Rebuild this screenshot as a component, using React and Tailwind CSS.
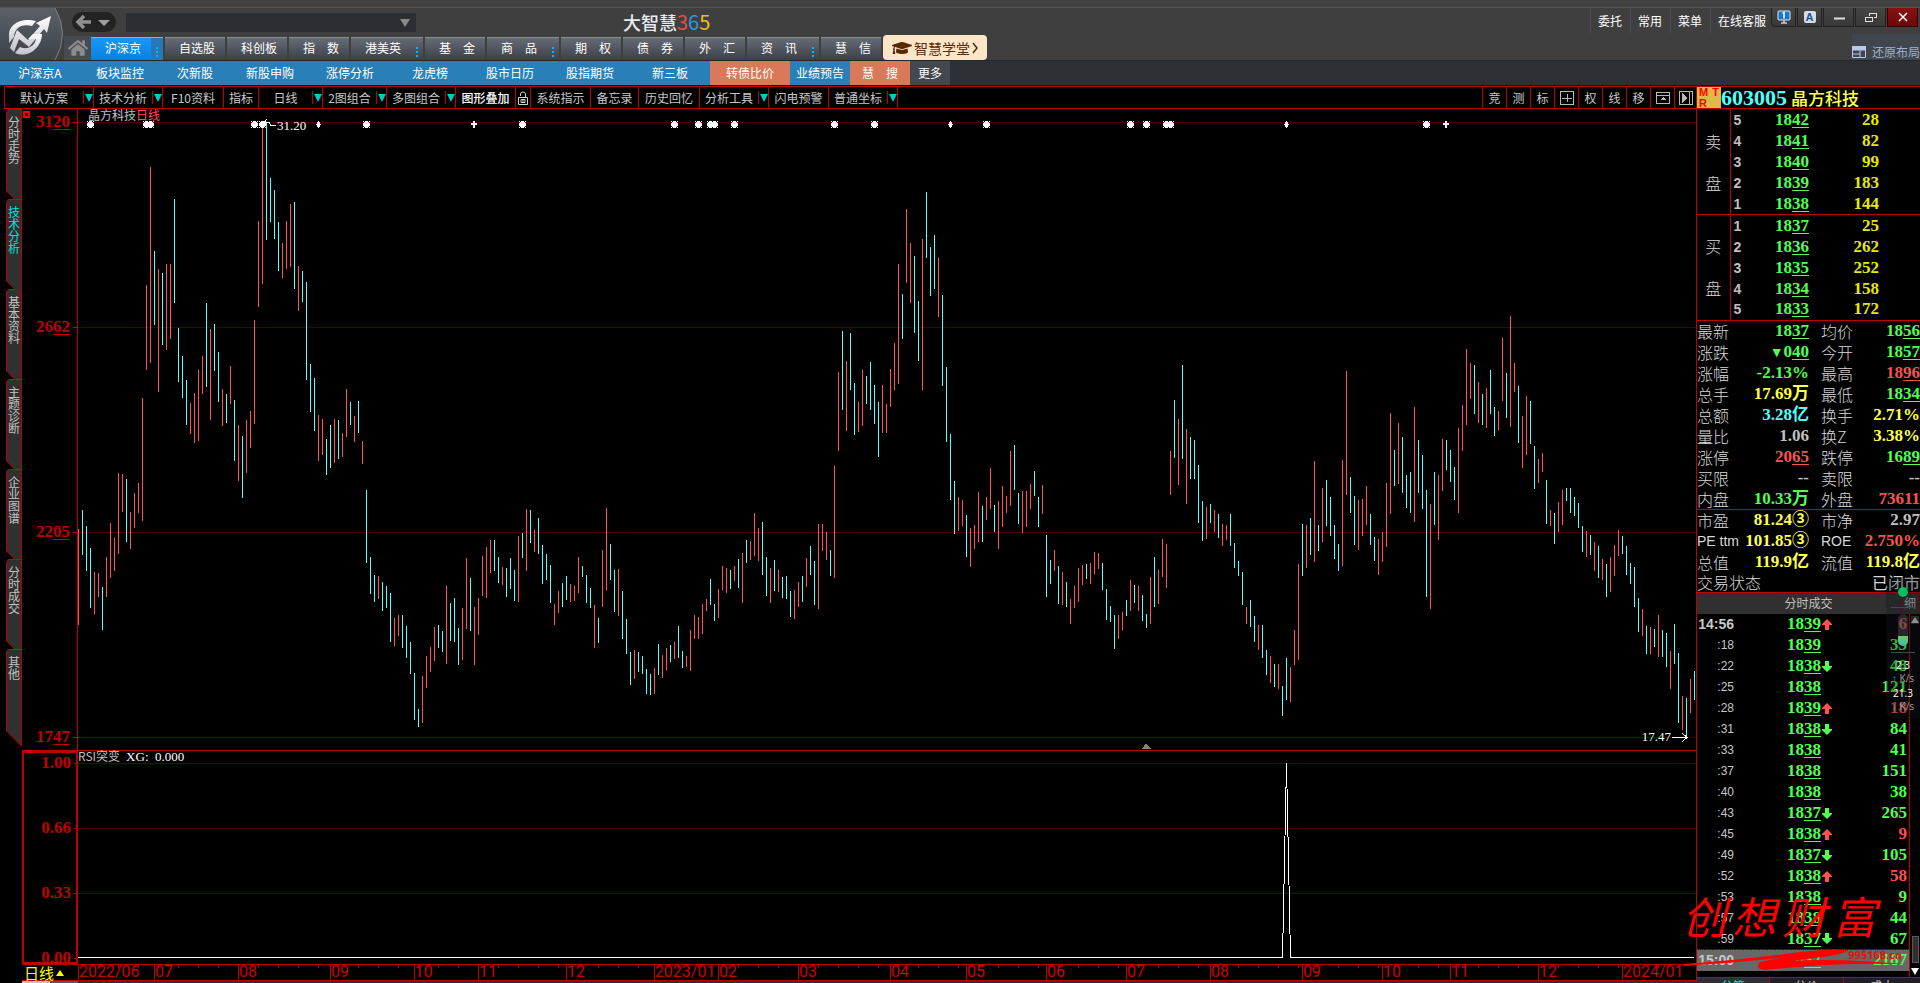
import { useState } from 'react';
import { FaGraduationCap, FaHome } from 'react-icons/fa';

// r = up bar, c = down bar, then high and low in chart units
const BARS = `
r529-625 c510-555 c526-571 c548-608 r572-614 r573-597 c587-630 r557-597 r523-578 r538-571
r473-554 r474-512 c479-542 r512-549 r493-528 r483-513 r398-521 r285-370 r167-363 c251-325
r269-392 c273-345 r264-350 r264-339 c199-303 c328-382 c356-398 c380-425 r403-434 r393-443
r370-441 r356-394 c303-387 r329-420 c324-371 c352-402 r389-426 c394-423 r366-404 c400-461
r425-481 c436-498 r420-473 r411-448 r320-424 r221-307 r124-284 c123-240 c178-222 c190-239
c222-271 r243-278 r221-269 r204-267 c202-289 r266-311 c271-302 c282-380 c364-412 c378-431
r415-461 r419-455 c439-475 c425-468 r419-463 c420-459 r433-457 r389-437 c402-425 r416-442
c401-433 r441-464 c490-563 c557-594 c575-602 r576-599 c582-611 c586-608 c593-642 r618-646
r615-636 c615-648 c626-658 c642-674 c673-720 c709-727 r676-723 r656-688 r647-672 r627-661
c625-648 c631-652 r586-664 c603-641 c598-642 c628-665 r608-660 r558-629 c578-631 r607-665
r598-635 r556-596 r547-598 r540-573 c540-571 c557-583 r567-585 c568-597 c558-589 c570-601
r536-602 c533-558 r509-571 c510-543 r530-552 c518-554 c545-584 c554-580 c565-603 r604-625
r591-613 c583-607 c576-600 r584-602 r586-601 r557-593 c566-577 c575-603 c588-608 r605-648
c618-643 r550-607 r508-590 c544-580 c570-612 r569-616 c591-639 c619-654 c652-685 r650-679
c652-672 c656-674 c669-694 c674-695 r668-694 c644-675 r655-678 r648-670 c645-662 r642-659
c626-658 c651-668 r656-667 r630-671 r615-639 r617-639 r604-634 r599-611 c579-605 c604-621
r589-618 r566-590 r568-593 c570-589 r566-581 c559-588 r553-603 c540-563 r541-560 r513-556
r528-561 c522-575 c557-596 r568-603 c560-591 r570-592 c577-598 c576-599 c591-617 r590-619
r582-607 c576-602 r558-587 c546-575 c561-605 r524-609 r524-551 r532-560 c550-576 r466-578
r372-451 c331-410 r361-431 c333-390 c383-435 r402-432 r370-426 c376-404 c362-410 c385-424
c402-457 r385-433 r404-433 r369-407 r343-390 r264-384 c294-339 r209-283 r243-303 c256-333
c301-361 r239-390 c192-258 c247-296 c235-289 r258-317 c295-386 c367-442 c434-500 c481-534
r497-531 r500-526 c515-557 r528-567 r525-549 r492-542 c506-542 r497-520 r468-509 c505-532
r501-549 r486-527 r496-513 r451-506 c445-490 c493-524 r491-533 r491-527 r484-509 c471-496
c497-527 r485-514 c535-597 c560-584 r550-571 c566-604 r572-605 c582-607 r599-624 r586-608
r568-602 r565-585 c564-579 r563-584 r552-574 r553-569 c563-590 c589-620 c606-622 c615-649
r615-639 r612-630 c600-616 r580-611 c585-603 r586-611 c595-621 c614-628 r577-624 c557-607
r570-604 r539-577 r544-588 r451-495 c400-458 r419-485 c365-459 r429-504 c437-479 c440-479
c465-523 c501-541 r507-539 c504-523 r510-532 c514-538 r524-546 r525-540 c514-546 c543-568
c561-576 c572-605 r607-624 c600-627 c616-642 r625-650 c625-658 c650-675 r656-683 c664-687
r664-689 c686-716 c658-700 r667-702 r630-665 r564-660 c524-576 r525-568 c518-555 r461-562
c525-551 r488-542 c480-526 c497-536 c525-559 c544-571 r460-566 r371-495 c477-513 c496-545
r500-550 r499-536 r486-525 c514-545 c537-561 r539-575 r532-562 r483-547 r413-514 c450-486
r423-484 c437-493 c475-508 c472-513 r407-522 c440-493 c455-509 c490-597 r504-609 c472-525
r475-540 r439-491 c440-470 c450-482 c467-500 r428-513 r405-451 r349-425 r363-399 c365-414
r382-423 c394-425 r388-428 c370-414 c407-436 r411-430 r338-401 c373-418 r316-427 r363-392
c386-443 r416-468 r396-455 c401-444 c446-489 r459-483 r453-472 c480-524 r510-526 c513-544
r502-532 r490-525 c488-501 c488-513 c497-516 c503-528 c526-552 r531-557 c535-555 r542-571
c546-578 r559-580 c564-597 r557-592 r545-576 r530-556 c536-554 c546-575 c563-584 c567-607
c598-632 r609-636 c626-654 r627-654 c629-647 r615-657 c630-657 c633-667 r651-689 c624-664
c653-723 r696-730 c698-738 r679-713 c671-700`.trim().split(/\s+/);

const STARS = [90, 146, 150, 254, 262, 366, 522, 674, 698, 710, 714, 734, 834, 874, 986, 1130, 1146, 1166, 1170, 1426];
const DIAMONDS = [318, 950, 1286];
const PLUSES = [474, 1446];

// label and number of pixels of trading days in the month
const MONTHS = [
  ['2022/06', 76], ['07', 84], ['08', 92], ['09', 84], ['10', 64], ['11', 88], ['12', 88],
  ['2023/01', 64], ['02', 80], ['03', 92], ['04', 76], ['05', 80], ['06', 80], ['07', 84],
  ['08', 92], ['09', 80], ['10', 68], ['11', 88], ['12', 84], ['2024/01', 74],
];

const TABS = [
  ['沪深京', true], ['自选股'], ['科创板'], ['指\u3000数'], ['港美英', true], ['基\u3000金'],
  ['商\u3000品', true], ['期\u3000权'], ['债\u3000券'], ['外\u3000汇'], ['资\u3000讯', true], ['慧\u3000信'],
];

const NAV = [
  ['沪深京A', 'w-20'], ['板块监控', 'w-20'], ['次新股', 'w-[70px]'], ['新股申购', 'w-20'],
  ['涨停分析', 'w-20'], ['龙虎榜', 'w-20'], ['股市日历', 'w-20'], ['股指期货', 'w-20'],
  ['新三板', 'w-20'], ['转债比价', 'w-20 bg-[#d9795a]'], ['业绩预告', 'w-[60px]'],
  ['慧\u3000搜', 'w-[60px] bg-[#d9795a]'], ['更多', 'w-10 bg-[#43484f]'],
];

const TOOLS = [
  ['默认方案', 'w-[78px]', true], ['技术分析', 'w-[58px]', true], ['F10资料', 'w-[60px]'],
  ['指标', 'w-[34px]'], ['日线', 'w-[53px]', true], ['2图组合', 'w-[53px]', true],
  ['多图组合', 'w-[58px]', true], ['图形叠加', 'w-[59px] text-white font-medium'], ['lock', 'w-[14px]'],
  ['系统指示', 'w-[59px]'], ['备忘录', 'w-[47px]'], ['历史回忆', 'w-[60px]'],
  ['分析工具', 'w-[58px]', true], ['闪电预警', 'w-[59px]'], ['普通坐标', 'w-[58px]', true],
];

const SIDE = ['分时走势', '技术分析', '基本资料', '主题诊断', '企业图谱', '分时成交', '其他'];

const G = 'text-[#50ff50]';
const R = 'text-[#ff5050]';
const Y = 'text-[#ffff50]';
const C = 'text-[#50ffff]';
const W = 'text-[#c0c0c0]';

const SELL = [[5, '1842', 28], [4, '1841', 82], [3, '1840', 99], [2, '1839', 183], [1, '1838', 144]];
const BUY = [[1, '1837', 25], [2, '1836', 262], [3, '1835', 252], [4, '1834', 158], [5, '1833', 172]];

const QUOTE = [
  ['最新', '1837', G, '均价', '1856', G],
  ['涨跌', '▼040', G, '今开', '1857', G],
  ['涨幅', '-2.13%', G, '最高', '1896', R],
  ['总手', '17.69万', Y, '最低', '1834', G],
  ['总额', '3.28亿', C, '换手', '2.71%', Y],
  ['量比', '1.06', W, '换Z', '3.38%', Y],
  ['涨停', '2065', R, '跌停', '1689', G],
  ['买限', '--', W, '卖限', '--', W],
  ['内盘', '10.33万', G, '外盘', '73611', R],
];

const VALUATION = [
  ['市盈', '81.24③', Y, '市净', '2.97', W],
  ['PE ttm', '101.85③', Y, 'ROE', '2.750%', R],
  ['总值', '119.9亿', Y, '流值', '119.8亿', Y],
];

const TRADES = [
  ['14:56', '1839', 'up', 6], [':18', '1839', '', 33], [':22', '1838', 'down', 48], [':25', '1838', '', 121],
  [':28', '1839', 'up', 18], [':31', '1838', 'down', 84], [':33', '1838', '', 41], [':37', '1838', '', 151],
  [':40', '1838', '', 38], [':43', '1837', 'down', 265], [':45', '1838', 'up', 9], [':49', '1837', 'down', 105],
  [':52', '1838', 'up', 58], [':53', '1838', '', 9], [':57', '1838', '', 44], [':59', '1837', 'down', 67],
  ['15:00', '1837', '', 2187],
];

// The last two digits are the decimals and get an underline
function Price({ value }) {
  const parts = value.match(/^(▼?)(\d{1,2})(\d{2})$/);
  if (!parts) return value;
  return (
    <>
      {parts[1] && <span className="text-sm">▼</span>}
      {parts[2]}
      <span className="underline decoration-1 underline-offset-2">{parts[3]}</span>
    </>
  );
}

function Logo() {
  return (
    <svg className="h-[52px] w-16 shrink-0" viewBox="0 0 64 52">
      <defs>
        <linearGradient id="logo-bg" x1="0" y1="0" x2="0" y2="1">
          <stop offset="0" stopColor="#5c6067" />
          <stop offset="1" stopColor="#3d4148" />
        </linearGradient>
        <linearGradient id="logo-fg" x1="0" y1="0" x2="0" y2="1">
          <stop offset="0" stopColor="#ffffff" />
          <stop offset="1" stopColor="#bfc2c8" />
        </linearGradient>
      </defs>
      <path d="M0 0H55Q70 26 55 52H0Z" fill="url(#logo-bg)" />
      <path d="M55 0Q70 26 55 52" fill="none" stroke="#7b8089" />
      <g fill="url(#logo-fg)">
        <path d="M9 28C8 17 20 9 36 13L32 18C22 15 14 20 14 29L9 35Z" />
        <path d="M10 40L17 22L28 32L40 18L36 15L51 8L47 25L44 21L29 39L19 31L14 44Z" />
        <path d="M15 45L20 39C28 43 35 37 36 31H28L33 26H42C42 38 30 51 15 45Z" />
      </g>
    </svg>
  );
}

function WindowButtons() {
  const base = 'flex h-[19px] items-center justify-center border border-t-0 border-[#222] bg-gradient-to-b from-[#454545] to-[#393939]';
  return (
    <div className="mr-0.5 flex gap-px self-start">
      <button type="button" aria-label="屏幕" className={`${base} w-[25px] rounded-bl`}>
        <svg className="h-3.5 w-3.5" viewBox="0 0 14 14">
          <rect x="1" y="1" width="12" height="9" rx="1" fill="#1878c8" stroke="#e0e8f0" />
          <path d="M4 13H10M7 10V13" stroke="#c8d0d8" strokeWidth="1.5" />
          <path d="M5.5 3.5L7 2.5V8.5" stroke="#fff" strokeWidth="1.5" fill="none" />
        </svg>
      </button>
      <button type="button" className={`${base} w-[25px]`}>
        <span className="flex h-3 w-3 items-center justify-center rounded-xs bg-[#d8dce0] font-['Liberation_Sans',sans-serif] text-[11px] leading-none font-bold text-[#1850b0]">A</span>
      </button>
      <button type="button" aria-label="最小化" className={`${base} w-[31px]`}>
        <svg className="h-3 w-3" viewBox="0 0 12 12"><path d="M1 7.5H12" stroke="#e0e0e0" strokeWidth="2" /></svg>
      </button>
      <button type="button" aria-label="还原" className={`${base} w-[31px]`}>
        <svg className="h-3 w-3" viewBox="0 0 12 12" fill="none" stroke="#e0e0e0" shapeRendering="crispEdges">
          <path d="M4.5 5V2.5H11.5V6.5H8.5M5 2H12" />
          <path d="M.5 6.5H7.5V10.5H.5ZM0 6H8" />
        </svg>
      </button>
      <button type="button" aria-label="关闭" className="flex h-[19px] w-[31px] items-center justify-center border border-t-0 border-[#300] bg-gradient-to-b from-[#8a1010] to-[#6a0808]">
        <svg className="h-2.5 w-2.5" viewBox="0 0 10 10"><path d="M1 1L9 9M9 1L1 9" stroke="#fff" strokeWidth="1.5" /></svg>
      </button>
    </div>
  );
}

function Header() {
  const [tab, setTab] = useState('沪深京');
  return (
    <header className="shrink-0 border-b border-[#22252a] bg-[#3f3f3f] text-xs text-white">
      <div className="h-2 border-b border-[#555] bg-[#424242]" />
      <div className="flex">
        <Logo />
        <div className="flex min-w-0 flex-1 flex-col">
          <div className="flex h-7 items-center">
            <button type="button" aria-label="后退" className="ml-2 h-5 w-11 shrink-0 rounded-full bg-[#232323]">
              <svg className="h-5 w-11" viewBox="0 0 44 20">
                <path d="M19 10H7M12 4L6 10L12 16" fill="none" stroke="#909090" strokeWidth="3.5" />
                <path d="M26 8H38L32 14Z" fill="#a0a0a0" />
              </svg>
            </button>
            <div className="relative ml-2.5 w-[290px] shrink-0">
              <select aria-label="搜索" className="h-[19px] w-full appearance-none bg-[#2b2f33]" />
              <svg className="pointer-events-none absolute top-1.5 right-1.5 h-2 w-2.5" viewBox="0 0 10 8"><path d="M0 0H10L5 8Z" fill="#8a8a8a" /></svg>
            </div>
            <h1 className="ml-[207px] text-lg leading-5 font-medium whitespace-nowrap text-[#e8e8f0]">
              大智慧<span className="text-xl leading-5 font-normal"><span className="text-[#e05048]">3</span><span className="text-[#3098e0]">6</span><span className="text-[#e8c020]">5</span></span>
            </h1>
            <nav className="ml-auto flex h-[25px] items-center self-start whitespace-nowrap">
              {['委托', '常用', '菜单', '在线客服'].map((t) => (
                <a key={t} href="#" className="flex h-full items-center border-l border-[#4a4f57] pr-2 pl-[7px] last:pr-[5px]">{t}</a>
              ))}
            </nav>
            <WindowButtons />
          </div>
          <div className="flex h-6 items-end">
            <button type="button" aria-label="首页" className="flex h-6 w-[27px] shrink-0 items-center justify-center bg-[#474a50] text-xl text-[#8c8c8c]"><FaHome /></button>
            <div className="flex gap-0.5">
              {TABS.map(([name, more]) => (
                <button
                  key={name}
                  type="button"
                  onClick={() => setTab(name)}
                  className={`flex h-[23px] shrink-0 border-t bg-gradient-to-b ${tab === name ? 'border-[#60c0ff] from-[#1898f8] to-[#0880e0]' : 'border-[#8a8f98] from-[#666b76] to-[#3c4048]'}`}
                >
                  <span className="w-[60px] pl-1 leading-5 whitespace-pre">{name}</span>
                  {more && (
                    <svg className={`h-full w-3 ${tab === name ? 'bg-[#2878b8]' : ''}`} viewBox="0 0 12 22">
                      <path d="M5 9h2v2h-2zM5 13h2v2h-2zM5 17h2v2h-2z" fill="#00b8ff" />
                    </svg>
                  )}
                </button>
              ))}
            </div>
            <button type="button" className="ml-0.5 flex h-[25px] w-[104px] shrink-0 items-center justify-center gap-0.5 rounded bg-[#fde6c8] text-sm whitespace-nowrap text-[#5a2a08]">
              <FaGraduationCap className="text-xl" />
              智慧学堂
              <svg className="h-3 w-1.5" viewBox="0 0 6 12"><path d="M1 1L5 6L1 11" fill="none" stroke="#5a2a08" strokeWidth="1.5" /></svg>
            </button>
            <button type="button" className="ml-auto flex h-[26px] w-[68px] shrink-0 items-end gap-1.5 overflow-hidden bg-[#41464e] text-xs whitespace-nowrap text-[#a0b0c8]">
              <svg className="mb-0.5 h-3 w-3.5 shrink-0" viewBox="0 0 14 12">
                <path d="M.5 .5H13.5V11.5H.5Z" fill="none" stroke="#b8c8e8" />
                <path d="M0 0H14V4H0ZM8 4V12M0 8H8" fill="#b8c8e8" stroke="#b8c8e8" />
              </svg>
              还原布局
            </button>
          </div>
        </div>
      </div>
    </header>
  );
}

function NavRow() {
  return (
    <nav className="flex h-[25px] shrink-0 border-b border-[#181a1c] bg-[#2d3136] text-xs leading-6 text-white">
      {NAV.map(([name, cls], i) => (
        <a key={name} href="#" className={`shrink-0 text-center whitespace-pre ${i < 12 ? 'bg-[#2980b9]' : ''} ${cls}`}>{name}</a>
      ))}
    </nav>
  );
}

function LockIcon() {
  return (
    <svg className="mx-auto h-3.5 w-2.5" viewBox="0 0 10 14" fill="none" stroke="#d0d0d0">
      <path d="M2.5 5V3Q2.5 1 5 1Q7.500 1 7.500 3V6.500M.5 6.500H9.500V13.500H.5ZM3 8.500H7V11.500H3ZM5 8.500V11.500" />
    </svg>
  );
}

const iconProps = { className: 'mx-auto h-3.5 w-3.5', viewBox: '0 0 14 14', fill: 'none', stroke: '#b8b8b8', shapeRendering: 'crispEdges' };

function Toolbar() {
  const right = [
    '竞', '测', '标',
    <svg key="grid" {...iconProps}><path d="M.5 .5H13.5V13.5H.5ZM7 3V11M2 7H12" /></svg>,
    '权', '线', '移',
    <svg key="up" {...iconProps}><path d="M.5 1.5H13.5V12.5H.5ZM0 4H14" /><path d="M4 9H10L7 6Z" fill="#b8b8b8" stroke="none" /></svg>,
    <svg key="play" {...iconProps}><path d="M.5 .5H13.5V13.5H.5ZM10.500 1V13" /><path d="M3 2L9 7L3 12Z" fill="#b8b8b8" stroke="none" /></svg>,
  ];
  return (
    <div className="ml-1 flex h-[23px] shrink-0 border-y border-l border-[#c00000] text-xs leading-5 text-[#c8c8c8]">
      {TOOLS.map(([name, cls, drop]) => (
        <div key={name} className="flex shrink-0 border-r border-[#c00000]">
          <button type="button" aria-label={name} className={`text-center whitespace-nowrap ${cls}`}>{name === 'lock' ? <LockIcon /> : name}</button>
          {drop && (
            <button type="button" aria-label={`${name}选项`} className="my-1 w-2.5 border-l border-[#c00000]">
              <svg className="mx-auto h-2 w-2" viewBox="0 0 8 8"><path d="M0 0H8L4 8Z" fill="#00c8c8" /></svg>
            </button>
          )}
        </div>
      ))}
      <div className="ml-auto flex">
        {right.map((item, i) => (
          <button key={i} type="button" className="w-6 shrink-0 border-l border-[#c00000] text-center last:w-[22px]">{item}</button>
        ))}
      </div>
    </div>
  );
}

function Sidebar() {
  const [active, setActive] = useState('技术分析');
  return (
    <div className="flex w-[22px] shrink-0 flex-col bg-black pl-1.5">
      {SIDE.map((name) => (
        <button
          key={name}
          type="button"
          onClick={() => setActive(name)}
          className={`relative h-[90px] w-4 shrink-0 ${active === name ? 'z-10 text-[#00e0e0]' : 'text-[#c0c0c0]'}`}
        >
          <svg className="absolute top-0 left-0 h-[98px] w-4" viewBox="0 0 16 98">
            <path d="M.5 3L2.500 .5H15.500V97L.5 82Z" fill="#303030" stroke="#c00000" />
          </svg>
          <span className="absolute top-[7px] left-0.5 w-3 text-xs leading-3">{name}</span>
        </button>
      ))}
    </div>
  );
}

function AxisLabel({ children }) {
  return (
    <div className="flex h-3 items-center justify-end gap-[3px] font-['Liberation_Serif',serif] text-[17px] leading-3 font-bold text-[#c00000]">
      <span>{children}</span>
      <span className="h-px w-1 bg-[#c00000]" />
    </div>
  );
}

function MainChart() {
  return (
    <div className="flex min-h-0 flex-1 border-b border-[#c00000]">
      <div className="relative flex w-14 shrink-0 flex-col justify-between border-r border-[#c00000] py-[7px]">
        <span className="absolute top-0.5 left-px h-[7px] w-[7px] border-2 border-[#ff0000]" />
        {['3120', '2662', '2205', '1747'].map((v) => <AxisLabel key={v}><Price value={v} /></AxisLabel>)}
      </div>
      <div className="relative min-w-0 flex-1">
        <svg className="absolute inset-0 h-full w-full" viewBox="78 109 1618 641" preserveAspectRatio="none" shapeRendering="crispEdges">
          {[122, 327, 532, 737].map((y) => <rect key={y} x="78" y={y} width="1618" height="1" fill="#400000" />)}
          {BARS.map((bar, i) => {
            const [high, low] = bar.slice(1).split('-').map(Number);
            return <rect key={i} x={78 + i * 4} y={high} width="1" height={low - high} fill={bar[0] === 'r' ? '#ff5050' : '#50ffff'} />;
          })}
          <g fill="#fff">
            {STARS.map((x) => (
              <path key={x} transform={`translate(${x - 3} 121)`} d="M2 0H5V1H6V2H7V5H6V6H5V7H2V6H1V5H0V2H1V1H2ZM0 0H1V1H0ZM6 0H7V1H6ZM0 6H1V7H0ZM6 6H7V7H6Z" />
            ))}
            {DIAMONDS.map((x) => <path key={x} transform={`translate(${x - 2} 121)`} d="M2 0H3V1H4V3H5V4H4V6H3V7H2V6H1V4H0V3H1V1H2Z" />)}
            {PLUSES.map((x) => <path key={x} transform={`translate(${x - 3} 121)`} d="M2 0H4V2H6V4H4V7H2V4H0V2H2Z" />)}
            <path d="M1142 749L1146 743L1151 749Z" fill="#808080" />
          </g>
          <g fill="none" stroke="#fff">
            <path d="M267 119L264 122L267 125M264 122.500H269L271 125.500H276" />
            <path d="M1672 737.500H1687M1682 733L1687 737.500L1682 742" />
          </g>
        </svg>
        <p className="absolute -top-px left-2.5 text-xs leading-[14px] text-[#c0c0c0]">晶方科技<span className="text-[#ff5050]">日线</span></p>
        <span className="absolute top-2.5 left-[199px] font-['Liberation_Serif',serif] text-[13px] leading-[14px] text-white">31.20</span>
        <span className="absolute right-[25px] bottom-1.5 font-['Liberation_Serif',serif] text-[13px] leading-[14px] text-white">17.47</span>
      </div>
    </div>
  );
}

function IndicatorChart() {
  return (
    <div className="flex h-[213px] shrink-0">
      <div className="flex w-14 shrink-0 flex-col justify-between pt-1.5 ring-2 ring-[#c00000] ring-inset">
        {['1.00', '0.66', '0.33', '0.00'].map((v) => <AxisLabel key={v}>{v}</AxisLabel>)}
      </div>
      <div className="relative min-w-0 flex-1">
        <svg className="absolute inset-0 h-full w-full" viewBox="78 751 1618 213" preserveAspectRatio="none" shapeRendering="crispEdges">
          {[763, 828, 893].map((y) => <rect key={y} x="78" y={y} width="1618" height="1" fill="#400000" />)}
          <path d="M78 957.500H1282.500L1286.500 763L1290.500 957.500H1694" fill="none" stroke="#fff" />
        </svg>
        <p className="absolute -top-0.5 left-0 text-xs leading-[14px] text-[#c0c0c0]">
          RSI突变<span className="ml-1.5 font-['Liberation_Serif',serif] text-[13px] text-white">XG:&nbsp; 0.000</span>
        </p>
      </div>
    </div>
  );
}

function DateAxis() {
  return (
    <div className="flex h-[17px] shrink-0 border-y border-[#c00000]">
      <button type="button" className="flex w-14 shrink-0 items-center pl-0.5 text-[15px] leading-[15px] text-[#ffff00]">
        日线<svg className="ml-0.5 h-1.5 w-2" viewBox="0 0 8 6"><path d="M0 6H8L4 0Z" fill="#ffff00" /></svg>
      </button>
      <div className="relative flex min-w-0 flex-1">
        <svg className="absolute top-0 left-0 h-[3px] w-full" viewBox="0 0 1618 3" preserveAspectRatio="none" shapeRendering="crispEdges">
          {Array.from({ length: 80 }, (_, i) => <rect key={i} x={20 * (i + 1)} y="0" width="1" height="3" fill="#c00000" />)}
        </svg>
        {MONTHS.map(([label, days], i) => (
          <span
            key={i}
            className="min-w-0 basis-0 border-l border-[#c00000] font-['Liberation_Sans_Narrow','Roboto',sans-serif] text-base leading-[14px] text-[#d00000]"
            style={{ flexGrow: days }}
          >
            {label}
          </span>
        ))}
      </div>
    </div>
  );
}

function DepthTable({ side, rows, cls }) {
  return (
    <table className={`w-full shrink-0 table-fixed border-b border-[#c00000] ${cls}`}>
      <tbody>
        {rows.map(([level, price, amount], i) => (
          <tr key={level} className="h-[21px]">
            {i === 0 && (
              <th rowSpan={5} scope="rowgroup" className="w-[33px] border-r border-[#c00000] p-0 text-center text-base leading-[42px] font-light text-[#d8d8d8]">
                {side}<br />盘
              </th>
            )}
            <td className="w-6 p-0 pl-[3px] font-['Liberation_Sans',sans-serif] text-sm leading-5 font-bold text-[#c0c0c0]">{level}</td>
            <td className="w-[55px] p-0 text-right font-['Liberation_Serif',serif] text-[17px] leading-5 font-bold text-[#50ff50]"><Price value={price} /></td>
            <td className="p-0 pr-[41px] text-right font-['Liberation_Serif',serif] text-[17px] leading-5 font-bold text-[#e8e800]">{amount}</td>
          </tr>
        ))}
      </tbody>
    </table>
  );
}

function QuoteRows({ rows }) {
  const num = "font-['Liberation_Serif','Noto_Sans_CJK_SC',serif] text-[17px] font-bold";
  const latin = "font-['Liberation_Sans',sans-serif] text-sm font-normal leading-5";
  return rows.map(([l1, v1, c1, l2, v2, c2]) => (
    <dl key={l1} className="grid h-[21px] shrink-0 grid-cols-[112px_1fr] text-base leading-5 font-light whitespace-nowrap text-[#d8d8d8]">
      <div className="flex justify-between">
        <dt className={l1 === 'PE ttm' ? latin : ''}>{l1}</dt>
        <dd className={`${num} leading-5 ${c1}`}><Price value={v1} /></dd>
      </div>
      <div className="flex justify-between pl-3">
        <dt className={l2 === 'ROE' ? latin : ''}>{l2}</dt>
        <dd className={`${num} leading-5 ${c2}`}><Price value={v2} /></dd>
      </div>
    </dl>
  ));
}

function TradeArrow({ dir }) {
  if (!dir) return null;
  return dir === 'up' ? (
    <svg className="h-[11px] w-2.5" viewBox="0 0 10 11"><path d="M5 0L10 5V6H7V11H3V6H0V5Z" fill="#ff5050" /></svg>
  ) : (
    <svg className="h-[11px] w-2.5" viewBox="0 0 10 11"><path d="M5 11L10 6V5H7V0H3V5H0V6Z" fill="#50ff50" /></svg>
  );
}

function TradeList() {
  return (
    <div className="flex min-h-0 flex-1 overflow-hidden border-b border-[#c00000]">
      <div className="min-w-0 flex-1 border-r border-[#c00000]">
        <table className="w-full table-fixed">
          <tbody>
            {TRADES.map(([time, price, dir, amount], i) => {
              const last = i === TRADES.length - 1;
              const full = time.length > 3;
              return (
                <tr key={time} className={`h-[21px] ${last ? 'border-t border-dotted border-[#c00000] bg-[#686868]' : ''}`}>
                  <td className={`w-[37px] p-0 text-right font-['Liberation_Sans',sans-serif] leading-5 text-[#c8c8c8] ${full ? 'text-sm font-bold' : 'text-xs'}`}>{time}</td>
                  <td className="w-[87px] p-0 text-right font-['Liberation_Serif',serif] text-[17px] leading-5 font-bold text-[#50ff50]"><Price value={price} /></td>
                  <td className="w-3 p-0 pl-px"><TradeArrow dir={dir} /></td>
                  <td className={`p-0 pr-0.5 text-right font-['Liberation_Serif',serif] text-[17px] leading-5 font-bold ${dir === 'up' ? 'text-[#ff5050]' : 'text-[#50ff50]'}`}>{amount}</td>
                </tr>
              );
            })}
          </tbody>
        </table>
      </div>
      <div className="flex w-2.5 shrink-0 flex-col items-center py-0.5">
        <svg className="h-2 w-2" viewBox="0 0 8 8"><path d="M0 8H8V0H0Z" fill="#303030" /><path d="M0 7H8L4 1Z" fill="#d0d0d0" /></svg>
        <span className="mt-auto mb-1 h-[27px] w-[7px] border border-[#585858] bg-[#303030]" />
        <svg className="h-2 w-2" viewBox="0 0 8 8"><path d="M0 1H8L4 8Z" fill="#fff" /></svg>
      </div>
    </div>
  );
}

// Floating network speed meter
function SpeedMeter() {
  return (
    <div className="absolute top-[577px] right-0 flex h-[141px] w-[34px] flex-col items-center rounded-bl-lg bg-[#141820]/35 pt-2.5 font-['Open_Sans',sans-serif] text-[10px] leading-[13px] text-white">
      <span className="h-2.5 w-2.5 rounded-full bg-[#00c060]" />
      <span className="mt-2.5 h-px w-6 bg-[#404850]" />
      <span className="mt-1.5 flex h-8 w-2.5 items-end overflow-hidden rounded-full bg-[#505860]/40">
        <span className="h-2.5 w-full bg-gradient-to-b from-[#70c860] to-[#30c0b0]" />
      </span>
      <span className="mt-1.5 h-px w-6 bg-[#404850]" />
      <span className="mt-1.5">2.3</span>
      <span className="text-[#a0a0a0]"><span className="text-[#20a0ff]">↑</span> K/s</span>
      <span className="mt-0.5">21.3</span>
      <span className="text-[#a0a0a0]"><span className="text-[#00c060]">↓</span> K/s</span>
    </div>
  );
}

function Watermark() {
  return (
    <div className="pointer-events-none absolute right-2 bottom-1.5 h-[92px] w-[230px] text-[#ff0000]">
      <p className="flex gap-1.5 text-[44px] leading-[60px] italic"><span>创</span><span>想</span><span>财</span><span>富</span></p>
      <svg className="absolute bottom-0 left-0 h-8 w-full" viewBox="0 0 230 32" fill="#ff0000">
        <path d="M2 19Q60 15 110 8Q150 3 166 5Q164 9 140 12L110 16Q150 13 222 19Q160 18 115 22L82 25Q72 23 78 17L98 13Q50 18 2 21Z" />
      </svg>
      <span className="absolute right-2.5 bottom-4 font-['Noto_Sans',sans-serif] text-[11px] leading-3 font-bold text-[#e01010]">995168.cn</span>
    </div>
  );
}

function QuotePanel() {
  return (
    <aside className="flex w-56 shrink-0 flex-col overflow-hidden border-l border-[#c00000]">
      <div className="flex h-[23px] shrink-0 items-center border-y border-[#c00000]">
        <span className="grid h-full w-6 grid-cols-2 bg-[#e2b84a] px-0.5 font-['Liberation_Sans',sans-serif] text-[11px] leading-[10px] font-bold text-[#ff0000]">
          <span>M</span><span className="text-right">T</span><span>R</span>
        </span>
        <span className="font-['Liberation_Serif',serif] text-[22px] leading-5 font-bold text-[#50ffff]">603005</span>
        <h2 className="ml-1 text-[17px] leading-5 font-medium text-[#ffff50]">晶方科技</h2>
      </div>
      <DepthTable side="卖" rows={SELL} cls="h-[106px]" />
      <DepthTable side="买" rows={BUY} cls="h-[105px]" />
      <div className="h-[189px] shrink-0 border-b border-[#c00000]"><QuoteRows rows={QUOTE} /></div>
      <QuoteRows rows={VALUATION} />
      <div className="flex h-5 shrink-0 justify-between border-b border-[#c00000] text-base leading-[18px] font-light text-[#d8d8d8]">
        <span>交易状态</span><span className="font-normal">已闭市</span>
      </div>
      <div className="flex h-[21px] shrink-0 bg-[#303030] text-xs leading-5 text-[#c0c0c0]">
        <h3 className="flex-1 pl-5 text-center">分时成交</h3>
        <button type="button" className="w-5 border border-[#900000] leading-[18px]">细</button>
      </div>
      <TradeList />
      <div className="flex h-[5px] shrink-0 overflow-hidden bg-[#202020] text-center text-xs leading-4 text-[#c0c0c0]">
        <button type="button" className="h-4 w-[73px] border-r border-[#c00000] bg-[#303030] text-[#00e0e0]">分笔</button>
        <button type="button" className="h-4 w-[74px] border-r border-[#c00000]">分价</button>
        <button type="button" className="h-4 flex-1">成本</button>
      </div>
    </aside>
  );
}

export default function App() {
  return (
    <div className="relative flex h-screen flex-col overflow-hidden bg-black font-['Noto_Sans_CJK_SC',sans-serif]">
      <Header />
      <NavRow />
      <main className="flex min-h-0 flex-1">
        <div className="flex min-w-0 flex-1 flex-col">
          <Toolbar />
          <div className="flex min-h-0 flex-1">
            <div className="flex border-l-4 border-[#151515]">
              <div className="-ml-1 flex"><Sidebar /></div>
            </div>
            <div className="flex min-w-0 flex-1 flex-col">
              <MainChart />
              <IndicatorChart />
              <DateAxis />
              <div className="flex h-0.5 shrink-0 bg-[#303030]">
                <span className="w-7 bg-[#c0c0c0]" />
                <span className="w-7 bg-[#585858]" />
              </div>
            </div>
          </div>
        </div>
        <QuotePanel />
      </main>
      <SpeedMeter />
      <Watermark />
    </div>
  );
}
